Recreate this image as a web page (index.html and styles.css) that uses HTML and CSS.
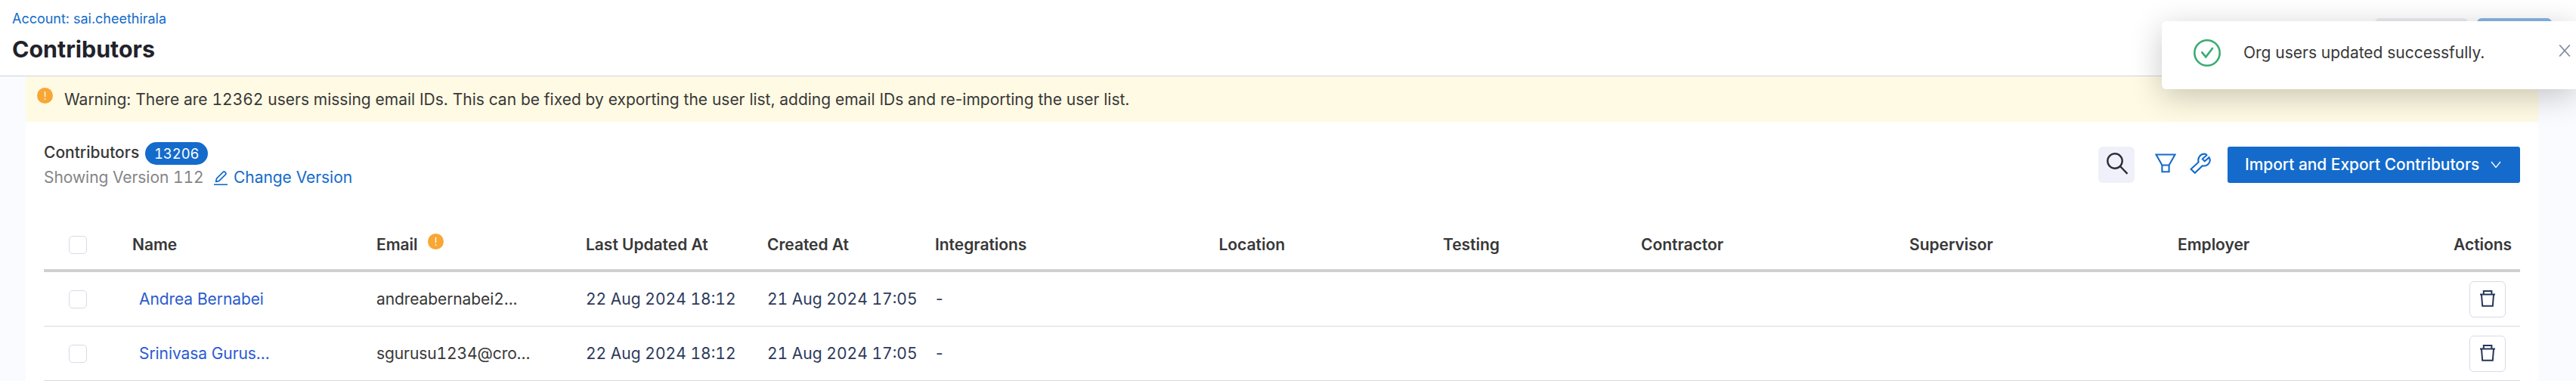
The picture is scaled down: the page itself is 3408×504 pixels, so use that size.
FILE: index.html
```html
<!DOCTYPE html>
<html lang="en">
<head>
<meta charset="utf-8">
<title>Contributors</title>
<link rel="stylesheet" href="styles.css">
</head>
<body>
<svg class="defs" aria-hidden="true">
  <symbol id="warn" viewBox="0 0 21 21"><circle cx="10.5" cy="10.5" r="10.5" fill="#f9a634"/><path d="M10.5 5v7.2M10.5 14.2v1.8" stroke="#fff" stroke-width="1.4"/></symbol>
  <symbol id="trash" viewBox="0 0 22 24"><path d="M1 6.5h20M5.8 6V2h10.6v4M3 7l1.2 14.8h13.6L19 7" fill="none" stroke="#26355a" stroke-width="2"/></symbol>
</svg>
<header class="header">
  <div class="heading">
    <a class="crumb">Account: sai.cheethirala</a>
    <h1 class="title">Contributors</h1>
  </div>
  <div class="header-actions"><span class="ghost"></span><span class="primary"></span></div>
</header>
<main class="page">
  <div class="warning">
    <svg class="warn-icon"><use href="#warn"/></svg>
    <span>Warning: There are <span class="num">12362</span> users missing email IDs. This can be fixed by exporting the user list, adding email IDs and re-importing the user list.</span>
  </div>
  <section class="card">
    <div class="toolbar">
      <div class="summary">
        <div class="summary-row"><span class="label">Contributors</span><span class="pill num">13206</span></div>
        <div class="version-row"><span class="version num">Showing Version 112</span>
          <svg class="pencil" viewBox="0 0 20 20"><path d="M1 19.2h18" stroke="#146bcb" stroke-width="1.6"/><path d="M3.6 15.4l1-4.2L13.4 2.4q1-1 2 0l1.2 1.2q1 1 0 2L7.8 14.4z" fill="none" stroke="#146bcb" stroke-width="1.7" stroke-linejoin="round"/></svg>
          <a class="change">Change Version</a></div>
      </div>
      <div class="tools">
        <span class="search"><svg viewBox="0 0 48 48"><circle cx="22" cy="19" r="9.7"/><path d="M29 26l9.5 9.8"/></svg></span>
        <svg class="filter" viewBox="0 0 28 26"><path d="M1.5 1.5h25L18.6 15.5H9.4zM9.4 15.5v8.8h9.2v-8.8"/></svg>
        <svg class="wrench" viewBox="0 0 28 28"><path d="M1.6 21.8L11.6 12.4C10 6.5 14.5 .8 21 1.8L22.4 3.2L16.8 8.2L19.8 11.4L25.6 6.2C29 12 24 18.3 16.6 17.4L6.8 26.8z"/></svg>
        <button class="import">Import and Export Contributors<svg viewBox="0 0 14 10"><path d="M1 1l6 7.5L13 1"/></svg></button>
      </div>
    </div>
    <div class="table">
      <div class="row head">
        <span class="check"></span><span>Name</span><span class="email">Email<svg class="warn-icon"><use href="#warn"/></svg></span><span>Last Updated At</span><span>Created At</span><span>Integrations</span><span>Location</span><span>Testing</span><span>Contractor</span><span>Supervisor</span><span>Employer</span><span>Actions</span>
      </div>
      <div class="row">
        <span class="check"></span><a class="name">Andrea Bernabei</a><span class="address">andreabernabei<span class="num">2</span>...</span><span class="date num">22 Aug 2024 18:12</span><span class="date num">21 Aug 2024 17:05</span><span class="date dash">-</span><span></span><span></span><span></span><span></span><span></span><span class="delete"><svg><use href="#trash"/></svg></span>
      </div>
      <div class="row">
        <span class="check"></span><a class="name">Srinivasa Gurus...</a><span class="address">sgurusu<span class="num">1234</span>@cro...</span><span class="date num">22 Aug 2024 18:12</span><span class="date num">21 Aug 2024 17:05</span><span class="date dash">-</span><span></span><span></span><span></span><span></span><span></span><span class="delete"><svg><use href="#trash"/></svg></span>
      </div>
    </div>
  </section>
</main>
<div class="toast">
  <svg class="ok" viewBox="0 0 36 36"><circle cx="18" cy="18" r="16.7"/><path d="M11.3 17.3l5 6L25 12"/></svg>
  <span>Org users updated successfully.</span>
  <svg class="close" viewBox="0 0 16 18"><path d="M1.2 1.5l13.6 15M14.8 1.5l-13.6 15"/></svg>
</div>
</body>
</html>
```
FILE: styles.css
```css
* { box-sizing: border-box; }
body {
  margin: 0;
  width: 3408px;
  height: 504px;
  overflow: hidden;
  background: #fafbff;
  color: #383838;
  font: 21px/24px Inter, sans-serif;
}
.num { font-variant-numeric: tabular-nums; }
.defs { position: absolute; width: 0; height: 0; }
svg { display: block; flex: none; }
.header {
  display: flex;
  justify-content: space-between;
  height: 101px;
  padding: 13px 32px 0 16px;
  background: #fff;
  border-bottom: 1px solid #d0d1e2;
}
.heading { display: flex; flex-direction: column; }
.crumb { font-size: 18px; line-height: 24px; letter-spacing: -.02px; color: #146bcb; }
.title { margin: 8px 0 0; font-size: 30.4px; line-height: 40px; font-weight: 700; color: #22222a; }
.header-actions { display: flex; gap: 12px; padding-top: 11px; }
.ghost { width: 123px; height: 48px; border-radius: 6px; background: #ececf4; }
.primary { width: 99px; height: 48px; border-radius: 6px; background: #89b5e5; }
.page { padding: 0 50px 0 34px; }
.warning {
  display: flex;
  gap: 15px;
  height: 60px;
  padding: 15px 15px 0;
  line-height: 31px;
  letter-spacing: -.02px;
  background: #fffae3;
}
.warn-icon { width: 21px; height: 21px; }
.card { height: 343px; padding: 0 24px; background: #fff; border-radius: 4px 4px 0 0; }
.toolbar { display: flex; justify-content: space-between; height: 130px; }
.summary { padding-top: 27px; }
.summary-row { display: flex; align-items: center; gap: 8px; height: 30px; }
.label { font-weight: 500; line-height: 28px; height: 30px; }
.pill {
  width: 83px;
  height: 30px;
  border-radius: 15px;
  background: #146bcb;
  color: #fff;
  font-size: 18.4px;
  line-height: 30px;
  text-align: center;
}
.version-row { display: flex; height: 34px; line-height: 34px; color: #858585; }
.version { width: 224px; letter-spacing: -.05px; white-space: nowrap; }
.pencil { width: 20px; height: 20px; margin: 7px 7px 0 0; }
.change { letter-spacing: -.05px; color: #146bcb; }
.tools { display: flex; align-items: flex-start; padding-top: 33px; }
.search { width: 48px; height: 48px; border-radius: 6px; background: #f0f0fa; }
.search svg { width: 48px; height: 48px; fill: none; stroke: #2d2e38; stroke-width: 2.4; }
.filter, .wrench { fill: none; stroke: #146bcb; stroke-width: 2.1; }
.filter { width: 28px; height: 26px; margin: 9px 0 0 27px; }
.wrench { width: 28px; height: 28px; margin: 8px 0 0 18px; }
.import {
  display: flex;
  align-items: center;
  gap: 15px;
  width: 387px;
  height: 48px;
  margin-left: 22px;
  padding: 0 0 0 23px;
  border: 0;
  border-radius: 3px;
  background: #146bcb;
  color: #fff;
  font: 500 20.9px/48px Inter, sans-serif;
  white-space: nowrap;
}
.import svg { width: 14px; height: 10px; fill: none; stroke: #fff; stroke-width: 1.4; }
.row {
  display: grid;
  grid-template-columns: 117px 323px 277px 240px 222px 375.5px 296.5px 262px 355px 355px 365px 87px;
  align-items: center;
  height: 72px;
  border-bottom: 1px solid #d9dae2;
}
.row.head { height: 69px; border-bottom: 4px solid #d0d0d0; font-weight: 600; letter-spacing: -.03px; }
.check { width: 24px; height: 24px; margin-left: 33px; border: 1px solid #d9dae6; border-radius: 5px; }
.email { display: flex; gap: 13px; }
.email .warn-icon { margin-top: -3px; }
.name { padding-left: 9px; letter-spacing: -.08px; color: #2a5bd0; }
.address { letter-spacing: -.1px; }
.date { color: #2d3a5c; }
.dash { padding-left: 1px; }
.delete {
  display: flex;
  justify-content: center;
  width: 48px;
  height: 48px;
  margin-left: 21px;
  padding-top: 10px;
  border: 1px solid #d9dae6;
  border-radius: 6px;
}
.delete svg { width: 22px; height: 24px; }
.toast {
  position: absolute;
  left: 2860px;
  top: 28px;
  display: flex;
  align-items: flex-start;
  width: 548px;
  height: 90px;
  padding-left: 42px;
  border-radius: 6px 0 0 6px;
  background: #fff;
  line-height: 83px;
  box-shadow: 0 9px 42px rgba(0, 0, 0, .22);
}
.toast span { width: 416px; margin-left: 30px; letter-spacing: -.02px; }
.ok { width: 36px; height: 36px; margin-top: 24px; fill: none; stroke: #3bab74; stroke-width: 2.6; stroke-linecap: round; }
.close { width: 16px; height: 18px; margin: 30px 0 0 1px; fill: none; stroke: #7c879c; stroke-width: 1.7; }
```
